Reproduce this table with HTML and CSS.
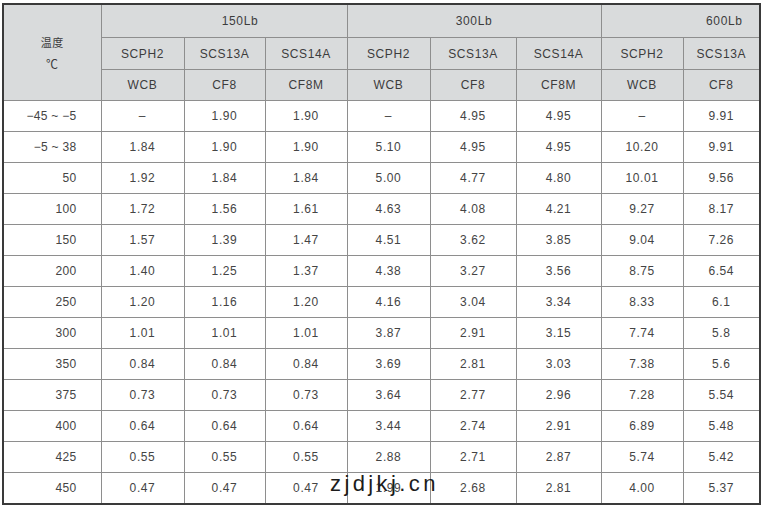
FILE: index.html
```html
<!DOCTYPE html>
<html lang="zh">
<head>
<meta charset="utf-8">
<link rel="stylesheet" href="styles.css">
</head>
<body>
<div class="page">
<table class="grid">
<colgroup>
<col class="c1"><col class="c2"><col class="c3"><col class="c4"><col class="c5"><col class="c6"><col class="c7"><col class="c8"><col class="c9">
</colgroup>
<thead>
<tr class="h1">
<th rowspan="3" class="temp"><div>温度</div><div class="deg">℃</div></th>
<th colspan="3" class="g150">150Lb</th>
<th colspan="3">300Lb</th>
<th colspan="2" class="g600">600Lb</th>
</tr>
<tr class="h2">
<th>SCPH2</th><th>SCS13A</th><th>SCS14A</th>
<th>SCPH2</th><th>SCS13A</th><th>SCS14A</th>
<th>SCPH2</th><th>SCS13A</th>
</tr>
<tr class="h3">
<th>WCB</th><th>CF8</th><th>CF8M</th>
<th>WCB</th><th>CF8</th><th>CF8M</th>
<th>WCB</th><th>CF8</th>
</tr>
</thead>
<tbody>
<tr><td class="t">−45 ~ −5</td><td>–</td><td>1.90</td><td>1.90</td><td>–</td><td>4.95</td><td>4.95</td><td>–</td><td>9.91</td></tr>
<tr><td class="t">−5 ~ 38</td><td>1.84</td><td>1.90</td><td>1.90</td><td>5.10</td><td>4.95</td><td>4.95</td><td>10.20</td><td>9.91</td></tr>
<tr><td class="t">50</td><td>1.92</td><td>1.84</td><td>1.84</td><td>5.00</td><td>4.77</td><td>4.80</td><td>10.01</td><td>9.56</td></tr>
<tr><td class="t">100</td><td>1.72</td><td>1.56</td><td>1.61</td><td>4.63</td><td>4.08</td><td>4.21</td><td>9.27</td><td>8.17</td></tr>
<tr><td class="t">150</td><td>1.57</td><td>1.39</td><td>1.47</td><td>4.51</td><td>3.62</td><td>3.85</td><td>9.04</td><td>7.26</td></tr>
<tr><td class="t">200</td><td>1.40</td><td>1.25</td><td>1.37</td><td>4.38</td><td>3.27</td><td>3.56</td><td>8.75</td><td>6.54</td></tr>
<tr><td class="t">250</td><td>1.20</td><td>1.16</td><td>1.20</td><td>4.16</td><td>3.04</td><td>3.34</td><td>8.33</td><td>6.1</td></tr>
<tr><td class="t">300</td><td>1.01</td><td>1.01</td><td>1.01</td><td>3.87</td><td>2.91</td><td>3.15</td><td>7.74</td><td>5.8</td></tr>
<tr><td class="t">350</td><td>0.84</td><td>0.84</td><td>0.84</td><td>3.69</td><td>2.81</td><td>3.03</td><td>7.38</td><td>5.6</td></tr>
<tr><td class="t">375</td><td>0.73</td><td>0.73</td><td>0.73</td><td>3.64</td><td>2.77</td><td>2.96</td><td>7.28</td><td>5.54</td></tr>
<tr><td class="t">400</td><td>0.64</td><td>0.64</td><td>0.64</td><td>3.44</td><td>2.74</td><td>2.91</td><td>6.89</td><td>5.48</td></tr>
<tr><td class="t">425</td><td>0.55</td><td>0.55</td><td>0.55</td><td>2.88</td><td>2.71</td><td>2.87</td><td>5.74</td><td>5.42</td></tr>
<tr><td class="t">450</td><td>0.47</td><td>0.47</td><td>0.47</td><td>1.99</td><td>2.68</td><td>2.81</td><td>4.00</td><td>5.37</td></tr>
</tbody>
</table>
<div class="watermark">zjdjkj.cn</div>
</div>
</body>
</html>
```

FILE: styles.css
```css
html, body {
  margin: 0;
  padding: 0;
  background: #ffffff;
}
.page {
  position: relative;
  padding: 3px 0 0 2px;
  width: 763px;
  height: 506px;
  box-sizing: border-box;
}
.grid {
  border-collapse: collapse;
  table-layout: fixed;
  width: 759px;
  border: 2px solid #3a3a3a;
  font-family: "Liberation Sans", Arial, "Noto Sans CJK SC", sans-serif;
  font-size: 12px;
  letter-spacing: 0.6px;
  color: #444444;
}
.c1 { width: 98px; }
.c2 { width: 83px; }
.c3 { width: 81px; }
.c4 { width: 82px; }
.c5 { width: 83px; }
.c6 { width: 86px; }
.c7 { width: 85px; }
.c8 { width: 82px; }
.c9 { width: 77px; }
.grid th, .grid td {
  border: 1px solid #8e8e8e;
  padding: 0;
  text-align: center;
  vertical-align: middle;
  font-weight: normal;
}
.grid th {
  background: #d9dbdc;
  color: #3c3c3c;
}
.h1 th { height: 32px; }
.h2 th { height: 31px; }
.h3 th { height: 30px; }
.grid td { height: 30px; }
.grid td.t {
  text-align: right;
  padding-right: 24px;
  letter-spacing: 0.3px;
}
.temp {
  line-height: 22px;
  font-family: "Noto Sans CJK SC", "Liberation Sans", sans-serif;
  font-size: 11px;
}
.temp .deg {
  font-size: 12px;
}
.g150 { padding-left: 32px !important; }
.g600 { padding-left: 88px !important; }
.watermark {
  position: absolute;
  left: 330px;
  top: 471px;
  font-family: "Liberation Sans", Arial, sans-serif;
  font-size: 22px;
  letter-spacing: 3.4px;
  color: #1c1c1c;
}
```
